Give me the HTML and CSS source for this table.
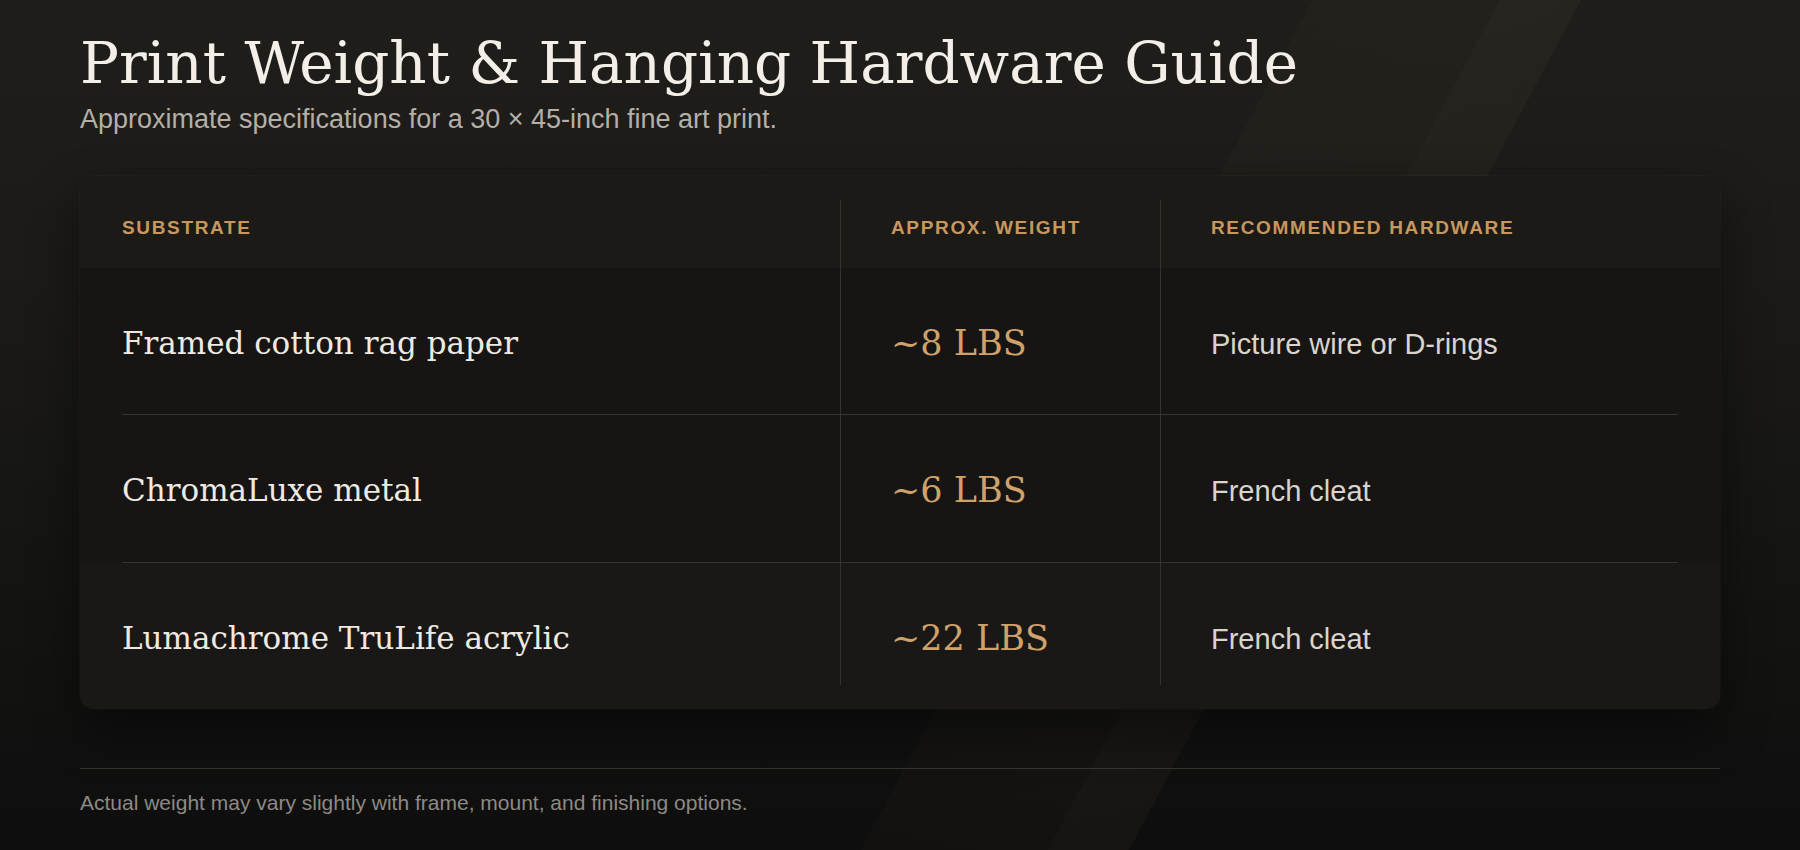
FILE: index.html
```html
<!DOCTYPE html>
<html lang="en">
<head>
<meta charset="utf-8">
<title>Print Weight &amp; Hanging Hardware Guide</title>
<link rel="stylesheet" href="styles.css">
</head>
<body>
<main class="page">
  <header class="intro">
    <h1 class="title">Print Weight &amp; Hanging Hardware Guide</h1>
    <p class="subtitle">Approximate specifications for a 30 × 45-inch fine art print.</p>
  </header>

  <section class="card">
    <div class="band band-head">
      <div class="grid grid-head">
        <div class="th">Substrate</div>
        <div class="th col">Approx. Weight</div>
        <div class="th col">Recommended Hardware</div>
      </div>
    </div>
    <div class="band band-row">
      <div class="grid grid-row rule">
        <div class="td sub">Framed cotton rag paper</div>
        <div class="td wt col">~8 LBS</div>
        <div class="td hw col">Picture wire or D-rings</div>
      </div>
    </div>
    <div class="band band-row">
      <div class="grid grid-row grid-row-2 rule">
        <div class="td sub">ChromaLuxe metal</div>
        <div class="td wt col">~6 LBS</div>
        <div class="td hw col">French cleat</div>
      </div>
    </div>
    <div class="band band-row band-last">
      <div class="grid grid-row grid-last">
        <div class="td sub">Lumachrome TruLife acrylic</div>
        <div class="td wt col">~22 LBS</div>
        <div class="td hw col">French cleat</div>
      </div>
    </div>
  </section>

  <footer class="foot">Actual weight may vary slightly with frame, mount, and finishing options.</footer>
</main>
</body>
</html>
```

FILE: styles.css
```css
html, body {
  margin: 0;
  padding: 0;
}

html {
  height: 100%;
  overflow: hidden;
}

body {
  height: 100%;
  font-family: "Liberation Sans", Arial, sans-serif;
  color: #ece7df;
  background-color: #141312;
  background-image:
    linear-gradient(118deg,
      rgba(0, 0, 0, 0) 58.3%,
      rgba(214, 170, 115, 0.018) 58.3%,
      rgba(214, 170, 115, 0.022) 66.6%,
      rgba(214, 170, 115, 0.045) 66.6%,
      rgba(214, 170, 115, 0.04) 70.2%,
      rgba(0, 0, 0, 0) 70.2%),
    linear-gradient(180deg, #201e1b 0%, #1b1a18 35%, #121211 80%, #0e0e0e 100%);
  background-repeat: no-repeat;
  background-size: 100% 850px;
}

.page {
  padding: 31px 80px 0;
}

.intro {
  display: flex;
  flex-direction: column;
}

.title {
  margin: 0;
  font-family: "DejaVu Serif", serif;
  font-weight: 400;
  font-size: 58px;
  line-height: 64px;
  color: #f3eee7;
}

.subtitle {
  margin: 7px 0 0;
  font-size: 27px;
  line-height: 35px;
  color: #b4afa7;
}

.card {
  margin-top: 39px;
  border-radius: 14px;
  overflow: hidden;
  background: #161513;
  box-shadow: 0 0 0 1px rgba(255, 235, 200, 0.025), 0 22px 50px rgba(0, 0, 0, 0.45);
}

.band {
  padding: 0 42px;
}

.band-head {
  padding-top: 24px;
  background: #1c1a17;
}

.band-row {
  background: #161513;
}

.band-last {
  background: #1a1816;
  padding-bottom: 24px;
}

.grid {
  display: grid;
  grid-template-columns: 718px 320px 1fr;
}

.grid > div {
  box-sizing: border-box;
}

.col {
  border-left: 1px solid #36332e;
  padding-left: 50px;
}

.grid-head {
  height: 68px;
}

.th {
  padding-top: 16px;
  font-weight: 700;
  font-size: 19px;
  line-height: 23px;
  letter-spacing: 1.65px;
  text-transform: uppercase;
  color: #c8975e;
}

.grid-row {
  height: 146px;
}

.grid-row-2 {
  height: 147px;
}

.grid-last {
  height: 122px;
}

.rule {
  border-bottom: 1px solid #38342c;
}

.sub {
  padding-top: 57px;
  font-family: "DejaVu Serif", serif;
  font-size: 31px;
  line-height: 37px;
  color: #efe9e1;
}

.wt {
  padding-top: 54px;
  font-family: "DejaVu Serif", serif;
  font-size: 35px;
  line-height: 42px;
  color: #cfa26b;
}

.hw {
  padding-top: 59px;
  font-size: 29px;
  line-height: 35px;
  color: #d9d4cd;
}

.foot {
  margin-top: 59px;
  border-top: 1px solid #37342f;
  padding-top: 19px;
  font-size: 21px;
  line-height: 29px;
  color: #8e8983;
}
```
